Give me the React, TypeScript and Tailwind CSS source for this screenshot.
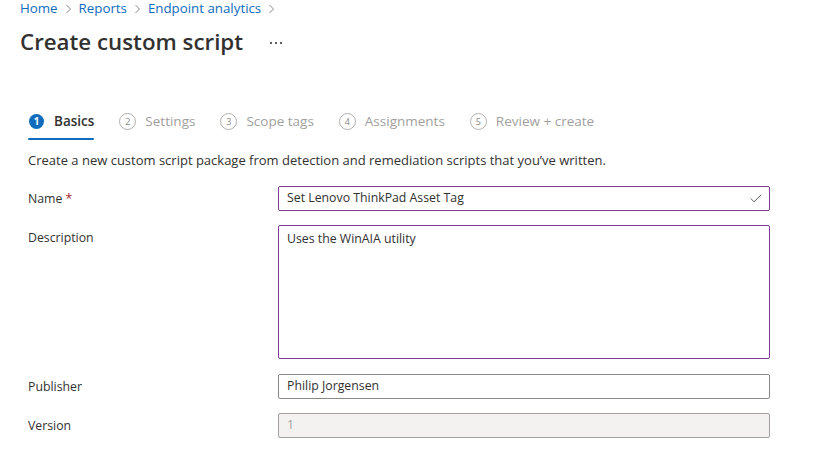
import React from "react";

const font = { fontFamily: '"Segoe UI", "Open Sans", sans-serif' };

function Step({ n, label, active }: { n: number; label: string; active?: boolean }) {
  return (
    <div className="relative flex items-center h-[32px]">
      {active ? (
        <span className="w-[15px] h-[15px] rounded-full bg-[#0f6cbd] text-white text-[10px] font-bold flex items-center justify-center leading-none">
          {n}
        </span>
      ) : (
        <span className="w-[17px] h-[17px] rounded-full border border-[#b3b0ad] text-[#8a8886] text-[9px] flex items-center justify-center leading-none">
          {n}
        </span>
      )}
      <span className={`text-[13.5px] ${active ? "ml-[10px] text-[#323130] font-semibold" : "ml-[9px] text-[#a19f9d]"}`}>{label}</span>
      {active && <span className="absolute left-[-1px] right-0 bottom-[-3px] h-[2px] bg-[#0f6cbd] rounded-sm" />}
    </div>
  );
}

function Row({ label, required, children, className }: { label: string; required?: boolean; children: React.ReactNode; className?: string }) {
  return (
    <div className={`flex items-start ${className ?? ""}`}>
      <div className="w-[250px] text-[12.3px] text-[#323130] pt-[4px]">
        {label}
        {required && <span className="text-[#a4262c]"> *</span>}
      </div>
      <div className="w-[492px]">{children}</div>
    </div>
  );
}

function Chevron() {
  return (
    <svg width="7" height="10" viewBox="0 0 7 10" className="mx-[7px]">
      <path d="M1.5 1 L5.5 5 L1.5 9" fill="none" stroke="#8a8886" strokeWidth="1" />
    </svg>
  );
}

export default function App() {
  return (
    <div className="w-[817px] h-[455px] bg-white overflow-hidden" style={font}>
      <div className="pl-[20px] text-[13.3px] text-[#0f6cbd] flex items-center h-[17px] leading-none">
        <span>Home</span>
        <Chevron />
        <span>Reports</span>
        <Chevron />
        <span>Endpoint analytics</span>
        <Chevron />
      </div>
      <div className="pl-[20px] mt-[10px] flex items-center h-[30px]">
        <h1 className="text-[22.3px] font-semibold text-[#323130] leading-none">Create custom script</h1>
        <span className="ml-[27px] mt-[2px] flex gap-[3px]">
          <span className="w-[2px] h-[2px] bg-[#605e5c]" />
          <span className="w-[2px] h-[2px] bg-[#605e5c]" />
          <span className="w-[2px] h-[2px] bg-[#605e5c]" />
        </span>
      </div>
      <div className="pl-[29px] mt-[48px] flex items-center gap-[25px]">
        <Step n={1} label="Basics" active />
        <Step n={2} label="Settings" />
        <Step n={3} label="Scope tags" />
        <Step n={4} label="Assignments" />
        <Step n={5} label="Review + create" />
      </div>
      <div className="pl-[28px] mt-[14px] text-[13px] text-[#323130]">
        Create a new custom script package from detection and remediation scripts that you’ve written.
      </div>
      <div className="pl-[28px] mt-[15px] flex flex-col">
        <Row label="Name" required>
          <div className="h-[25px] border border-[#7e3d92] rounded-[2px] flex items-center px-[8px] text-[12.3px] text-[#323130]">
            <span className="flex-1">Set Lenovo ThinkPad Asset Tag</span>
            <svg width="12" height="9" viewBox="0 0 12 9" className="mr-[-1px]">
              <path d="M0.8 4.5 L4 7.8 L11.2 0.8" fill="none" stroke="#605e5c" strokeWidth="1" />
            </svg>
          </div>
        </Row>
        <Row label="Description" className="mt-[14px]">
          <div className="h-[134px] border border-[#7e3d92] rounded-[2px] px-[8px] pt-[4px] text-[12.3px] text-[#323130]">
            Uses the WinAIA utility
          </div>
        </Row>
        <Row label="Publisher" className="mt-[15px]">
          <div className="h-[25px] border border-[#8a8886] rounded-[2px] flex items-center px-[8px] text-[12.3px] text-[#323130]">
            Philip Jorgensen
          </div>
        </Row>
        <Row label="Version" className="mt-[14px]">
          <div className="h-[25px] border border-[#a19f9d] bg-[#f3f2f1] rounded-[2px] flex items-center px-[8px] text-[12.3px] text-[#a19f9d]">
            1
          </div>
        </Row>
      </div>
    </div>
  );
}
